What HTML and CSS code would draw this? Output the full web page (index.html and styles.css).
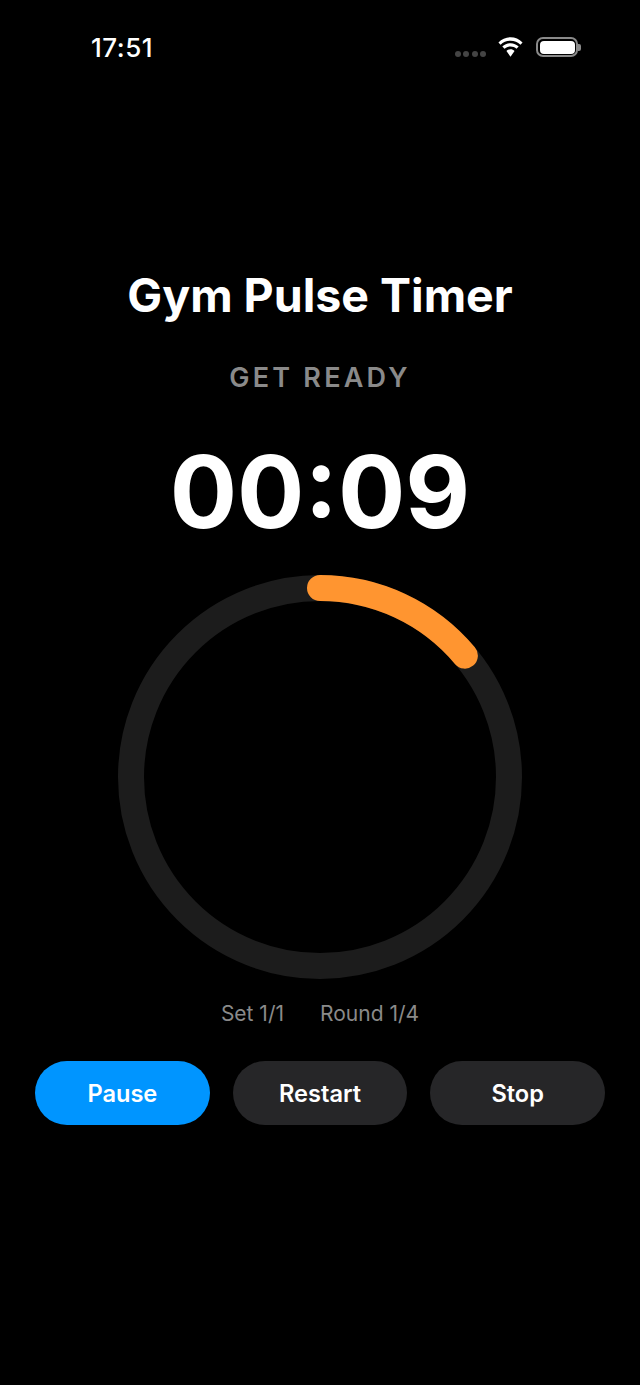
FILE: index.html
```html
<!DOCTYPE html>
<html lang="en">
<head>
  <title>Gym Pulse Timer</title>
  <link rel="stylesheet" href="styles.css">
</head>
<body>
  <div class="status-bar">
    <div class="clock">17:51</div>
    <div class="status-icons">
      <div class="signal"><span></span><span></span><span></span><span></span></div>
      <svg class="wifi" width="27" height="20" viewBox="0 0 28 20">
        <path d="M14 3.600c4 0 7.600 1.500 10.300 4l2.200-2.300C23.100 2 18.700 0 14 0S4.900 2 1.500 5.300l2.200 2.300c2.700-2.500 6.300-4 10.300-4z" fill="#fff"/>
        <path d="M14 9.400c2.400 0 4.600.9 6.200 2.400l2.300-2.300C20.300 7.300 17.300 6 14 6s-6.300 1.300-8.500 3.500l2.300 2.300c1.600-1.500 3.800-2.400 6.200-2.400z" fill="#fff"/>
        <path d="M14 12.400c-1.600 0-3.100.6-4.200 1.700L14 20l4.200-5.900c-1.100-1.100-2.600-1.700-4.200-1.700z" fill="#fff"/>
      </svg>
      <div class="battery">
        <div class="battery-body"><div class="battery-fill"></div></div>
        <div class="battery-tip"></div>
      </div>
    </div>
  </div>

  <div class="timer-screen">
    <h1 class="title">Gym Pulse Timer</h1>
    <div class="phase">GET READY</div>
    <div class="countdown">00:09</div>

    <svg class="ring" width="404" height="404" viewBox="0 0 404 404">
      <circle class="ring-track" cx="202" cy="202" r="189"/>
      <circle class="ring-progress" cx="202" cy="202" r="189"/>
    </svg>

    <div class="counters">
      <span>Set 1/1</span>
      <span>Round 1/4</span>
    </div>

    <div class="controls">
      <div class="btn btn-primary">Pause</div>
      <div class="btn">Restart</div>
      <div class="btn">Stop</div>
    </div>
  </div>
</body>
</html>
```

FILE: styles.css
```css
body {
  background-color: #000;
  color: #fff;
  font-family: Inter, "Liberation Sans", sans-serif;
  margin: 0;
  height: 1385px;
  overflow: hidden;
}

.status-bar {
  display: flex;
  justify-content: space-between;
  align-items: center;
  height: 94px;
  padding: 0 59px 0 91px;
}

.clock {
  font-size: 26px;
  font-weight: 500;
  letter-spacing: 0.500px;
}

.status-icons {
  display: flex;
  align-items: center;
}

.signal {
  display: flex;
  gap: 2.500px;
  margin: 14px 11px 0 0;
}

.signal span {
  width: 6px;
  height: 6px;
  border-radius: 50%;
  background-color: #444;
}

.wifi {
  margin-right: 12px;
}

.battery {
  display: flex;
  align-items: center;
}

.battery-body {
  width: 42px;
  height: 20px;
  box-sizing: border-box;
  padding: 1.500px;
  border: 2px solid #8a8a8a;
  border-radius: 7px;
}

.battery-fill {
  height: 100%;
  background-color: #fff;
  border-radius: 4px;
}

.battery-tip {
  width: 3px;
  height: 7px;
  background-color: #8a8a8a;
  border-radius: 0 2px 2px 0;
}

.timer-screen {
  display: flex;
  flex-direction: column;
  align-items: center;
  padding-top: 171px;
}

.title {
  margin: 0;
  font-size: 46.500px;
  line-height: 60px;
  font-weight: 700;
}

.phase {
  margin-top: 37px;
  font-size: 27px;
  line-height: 32px;
  font-weight: 600;
  letter-spacing: 3.200px;
  color: #8a8a8a;
}

.countdown {
  margin-top: 35px;
  font-size: 100px;
  line-height: 126px;
  font-weight: 700;
}

.ring {
  margin-top: 20px;
  display: block;
}

.ring circle {
  fill: none;
  stroke-width: 26;
}

.ring-track {
  stroke: #1c1c1c;
}

.ring-progress {
  stroke: #ff9530;
  stroke-linecap: round;
  stroke-dasharray: 165 1023;
  transform: rotate(-90deg);
  transform-origin: center;
}

.counters {
  display: flex;
  gap: 36px;
  margin-top: 21px;
  font-size: 21px;
  line-height: 28px;
  color: #8a8a8a;
}

.controls {
  display: flex;
  gap: 23px;
  align-self: stretch;
  margin-top: 33px;
  padding: 0 35px;
}

.btn {
  flex: 1;
  height: 64px;
  display: flex;
  justify-content: center;
  align-items: center;
  border-radius: 32px;
  background-color: #262628;
  font-size: 23.600px;
  font-weight: 600;
}

.btn-primary {
  background-color: #0095ff;
}
```
